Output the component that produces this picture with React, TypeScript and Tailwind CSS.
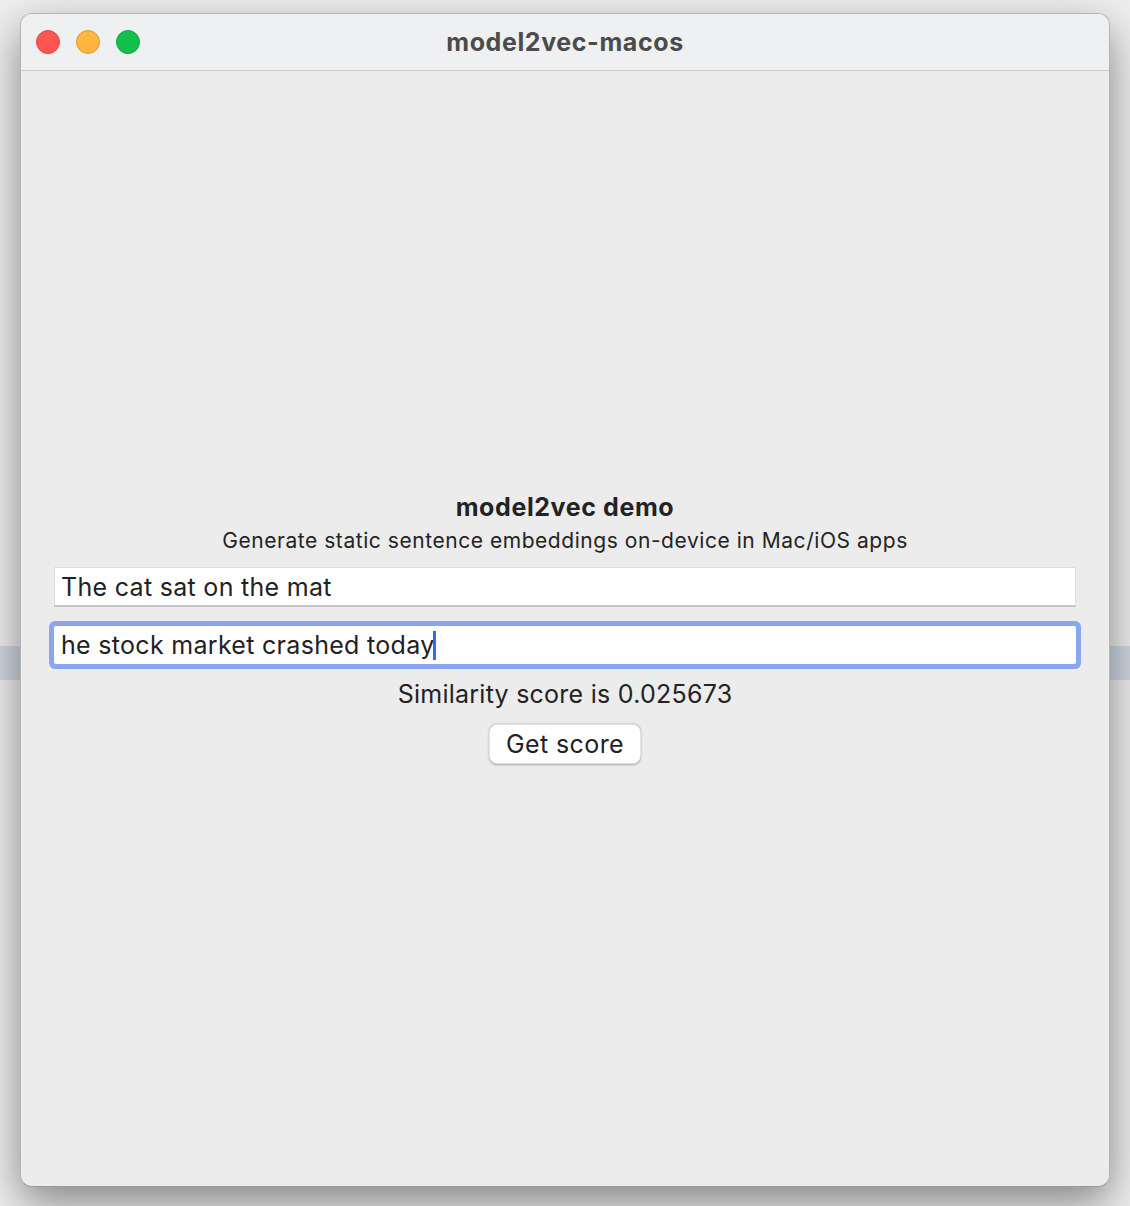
import React from "react";

export default function App() {
  const font = { fontFamily: 'Inter, "Noto Sans", "Liberation Sans", sans-serif' };
  return (
    <div
      className="relative w-[1130px] h-[1206px] overflow-hidden bg-[#efefef]"
      style={font}
    >
      {/* background window's selected row, behind this window */}
      <div className="absolute left-0 right-0 top-[646px] h-[34px] bg-[#d0d8e3]" />
      <div className="relative pt-[13px] pl-[20px]">
        <div className="w-[1090px] h-[1174px] rounded-[12px] border border-[#b4b4b4] border-b-[#999999] bg-[#ebeceb] shadow-[0_16px_44px_rgba(0,0,0,0.45)] flex flex-col overflow-hidden">
          {/* title bar */}
          <div className="relative h-[57px] shrink-0 bg-[#eef0f1] border-b border-[#c9c9c9] flex items-center justify-center">
            <div className="absolute left-[15px] top-[16px] flex gap-[16px]">
              <div className="w-[24px] h-[24px] rounded-full bg-[#fe5551] border border-[#e2463f]" />
              <div className="w-[24px] h-[24px] rounded-full bg-[#ffb53f] border border-[#e09a2a]" />
              <div className="w-[24px] h-[24px] rounded-full bg-[#12c04b] border border-[#0ea53e]" />
            </div>
            <div className="text-[25px] font-bold text-[#4b4b4b] leading-[30px] tracking-[0.6px] mt-[-1px]">
              model2vec-macos
            </div>
          </div>
          {/* content */}
          <div className="flex-1 flex flex-col items-center justify-center px-[33px]">
            <div className="text-[25px] font-bold text-[#232323] leading-[28px] tracking-[0.6px]">
              model2vec demo
            </div>
            <div className="mt-[8px] text-[21px] text-[#232323] leading-[24px] tracking-[0.55px]">
              Generate static sentence embeddings on-device in Mac/iOS apps
            </div>
            <div className="mt-[14px] w-full h-[40px] bg-white border-b-2 border-[#c4c4c4] border-t border-t-[#dedede] border-x border-x-[#dedede] flex items-center pl-[6px] text-[25px] text-[#222] leading-[30px] tracking-[0.3px]">
              The cat sat on the mat
            </div>
            <div className="mt-[19px] w-full h-[38px] bg-white rounded-[2px] shadow-[0_0_0_5px_#8aa6ee] flex items-center pl-[7px] text-[25px] text-[#222] leading-[30px] tracking-[0.3px]">
              <span>he stock market crashed today</span>
              <span className="inline-block w-[3px] h-[29px] bg-[#2f6cf0] ml-[-2px]" />
            </div>
            <div className="mt-[15px] text-[25px] text-[#232323] leading-[30px] tracking-[0.25px]">
              Similarity score is 0.025673
            </div>
            <button className="mt-[15px] h-[40px] px-[16px] rounded-[8px] bg-white shadow-[0_0.5px_2px_rgba(0,0,0,0.3)] border border-[#e2e2e2] text-[25px] text-[#222] leading-[30px] tracking-[0.4px]">
              Get score
            </button>
          </div>
        </div>
      </div>
    </div>
  );
}
